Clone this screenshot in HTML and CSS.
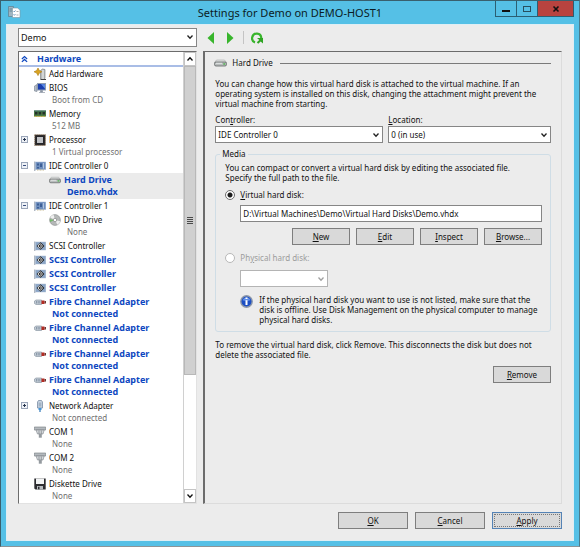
FILE: index.html
```html
<!DOCTYPE html>
<html lang="en">

<head>
  <meta charset="UTF-8" />
  <meta name="viewport" content="width=device-width, initial-scale=1.0" />
  <title>Settings for Demo on DEMO-HOST1</title>
  <link rel="stylesheet" href="styles.css">
</head>

<body>
  <!-- shared icons -->
  <svg class="sprite" aria-hidden="true">
    <symbol id="chevron" viewBox="0 0 8 8">
      <path d="M1.5 2.5 4 5.3 6.5 2.5" fill="none" stroke="currentColor" stroke-width="1.3" />
    </symbol>
    <symbol id="plus" viewBox="0 0 7 7">
      <rect x=".5" y=".5" width="6" height="6" fill="#eef1f6" stroke="#9aa5b8" />
      <path d="M2 3.5h3M3.5 2v3" stroke="#26334d" />
    </symbol>
    <symbol id="minus" viewBox="0 0 7 7">
      <rect x=".5" y=".5" width="6" height="6" fill="#eef1f6" stroke="#9aa5b8" />
      <path d="M2 3.5h3" stroke="#3a4f80" />
    </symbol>
    <symbol id="add-hardware" viewBox="0 0 12 12">
      <path d="M6.5 2.5 8.5 1l2.5.5v9L9 12l-2.5-1z" fill="#b9bcbc" stroke="#74797a" stroke-width=".6" />
      <path d="M9 2v9" stroke="#eef0f0" />
      <path d="M6.5 11.5H12" stroke="#444" />
      <path d="M4 0l1.300 2.500L8 3.800 5.300 5.100 4 7.600 2.700 5.100 0 3.800l2.700-1.300z" fill="#d9a321" stroke="#a97a10" stroke-width=".6" />
    </symbol>
    <symbol id="bios" viewBox="0 0 12 12">
      <path d="M.5 4 3 2.5v7L.5 9z" fill="#b4bcc8" stroke="#76818f" stroke-width=".6" />
      <rect x="3.5" y="1.5" width="8" height="6.5" fill="#1b3fae" stroke="#8f9db2" />
      <path d="m7 2 4 .2v4.5z" fill="#5d8ce6" />
      <path d="M6.5 8.5h2V10h-2zM5 10.5h6" fill="#8c96a5" stroke="#8c96a5" stroke-width=".7" />
    </symbol>
    <symbol id="memory" viewBox="0 0 12 12">
      <path d="M0 2.5h12v6H0z" fill="#4d7a44" />
      <path d="M1 4h2.5v2.5H1zM4.7 4h2.5v2.5H4.7zM8.5 4H11v2.5H8.5z" fill="#23302c" />
      <path d="M0 3h12" stroke="#2e5f63" stroke-width=".8" />
      <path d="M.5 8.5h11" stroke="#c6aa3c" stroke-dasharray="1 .6" />
    </symbol>
    <symbol id="processor" viewBox="0 0 12 12">
      <rect x=".7" y=".7" width="10.8" height="10.8" fill="#3a322f" stroke="#a08a70" stroke-dasharray="1 1" />
      <rect x="1.5" y="1.5" width="9" height="9" fill="#26262a" />
      <rect x="3" y="3" width="6" height="6" fill="#c0c2c6" />
    </symbol>
    <symbol id="ide" viewBox="0 0 12 12">
      <path d="M.3 1.5h1V11h-1z" fill="#8d99a8" />
      <path d="M1.5 2h10.3v7.5H1.5z" fill="#6f8fbd" stroke="#9db3d2" stroke-width=".5" />
      <path d="M3 3.5h2v2H3zM6 3.5h2V7H6zM3 7h2v1.5H3z" fill="#3d5f96" />
      <path d="M9.5 3v5.5" stroke="#c4d3ea" stroke-width=".8" />
      <path d="M3 10h7" stroke="#b59f62" stroke-width=".7" stroke-dasharray="1 .5" />
    </symbol>
    <symbol id="scsi" viewBox="0 0 12 12">
      <path d="M.3 1.5h1V11h-1z" fill="#8d99a8" />
      <path d="M1.5 2h10.3v8H1.5z" fill="#8ba5c6" stroke="#a9bbd3" stroke-width=".5" />
      <path d="M6.5 2.2 10.3 6 6.5 9.8 2.7 6z" fill="#161616" />
      <path d="M7.7 4.6a2 2 0 1 0 0 2.8M5.8 6H9" fill="none" stroke="#fff" stroke-width=".9" />
    </symbol>
    <symbol id="drive" viewBox="0 0 13 8">
      <path d="M2.5 1h8l2 2.5H.5z" fill="#dfe1e1" stroke="#9a9d9d" stroke-width=".5" />
      <rect x=".5" y="3" width="12" height="4" rx="1.5" fill="#b9bdbd" stroke="#606464" stroke-width=".8" />
      <path d="M2 4.3h6" stroke="#f0f2f2" stroke-width=".8" />
      <path d="M9.3 5h2" stroke="#3cb43c" stroke-width="1.2" />
    </symbol>
    <symbol id="dvd" viewBox="0 0 12 12">
      <circle cx="6" cy="6" r="5.4" fill="#b5b8b8" stroke="#888c8c" stroke-width=".6" />
      <path d="M6 6 1.2 3.6A5.4 5.4 0 0 1 4.6.8zM6 6l5.2 1.3a5.4 5.4 0 0 1-2.800 3.4z" fill="#efefef" />
      <path d="M6 6 .8 5.2 1 8z" fill="#72b86a" />
      <circle cx="6" cy="6" r="1.7" fill="#fff" stroke="#777" stroke-width=".6" />
    </symbol>
    <symbol id="fibre" viewBox="0 0 12 12">
      <path d="M.5 5 2 4h5.5v4.5H2l-1.500-1z" fill="#c3ccd6" stroke="#7e8b99" stroke-width=".6" />
      <path d="M2.500 5v2.500M4.200 5v2.500M5.800 5v2.500" stroke="#66788c" stroke-width=".6" />
      <path d="M7.5 4.5h3V8h-3z" fill="#b32a22" />
      <path d="M10.5 5H12v2.5h-1.500z" fill="#6e3430" />
    </symbol>
    <symbol id="network" viewBox="0 0 12 12">
      <path d="M4.5.5h3l1 1.5v6h-5V2z" fill="#c9d6e4" stroke="#6e8199" stroke-width=".7" />
      <path d="M5.2 2.5v4M6.8 2.5v4" stroke="#6e8199" stroke-width=".6" />
      <path d="M4.5 8h3v2h-3z" fill="#4595d8" />
      <path d="M6 10v2" stroke="#2b76b8" stroke-width="1.2" />
    </symbol>
    <symbol id="com" viewBox="0 0 12 12">
      <path d="M.3 1h11.4v3H.3z" fill="#b4b9be" stroke="#72787e" stroke-width=".6" />
      <path d="M2 4h8.2L9 8H3.5z" fill="#d3d7da" stroke="#7c8288" stroke-width=".6" />
      <path d="M5 4.5V8M7.3 4.5V8" stroke="#6d7379" stroke-width=".6" />
      <path d="M4.8 8h3v3.7h-3z" fill="#949a9f" />
    </symbol>
    <symbol id="diskette" viewBox="0 0 12 12">
      <path d="M.3.5h11.4v11H1.5l-1.200-1z" fill="#2d2d31" />
      <path d="M2 .5h8V6H2z" fill="#f3f4f5" />
      <path d="M3 8h6v3.5H3z" fill="#b8bcc0" />
      <path d="M4 8.7h1.5v2.5H4z" fill="#2d2d31" />
    </symbol>
  </svg>

  <div class="window">
    <header class="titlebar">
      <svg class="app-icon" viewBox="0 0 13 12" aria-hidden="true">
        <path d="M.5.5h5v10h-5z" fill="#9fb6c2" stroke="#5d7e8e" stroke-width=".7" />
        <path d="M1.5 3h3M1.5 5h3" stroke="#4e7282" stroke-width=".7" />
        <path d="M4.5 2h5L12 4v7.5H4.5z" fill="#fff" stroke="#7c96a2" stroke-width=".6" />
        <path d="m5.5 5 .8.8 1.200-1.300m-2 4 .8.8L7.5 8" fill="none" stroke="#2c6da3" stroke-width=".7" />
        <path d="M8.5 5.5h2M8.5 9h2" stroke="#888" stroke-width=".7" />
      </svg>
      <h1>Settings for Demo on DEMO-HOST1</h1>
      <div class="window-controls">
        <button type="button" aria-label="Minimize"><svg viewBox="0 0 8 8"><path d="M0 6h8" stroke="#111" stroke-width="2" /></svg></button>
        <button type="button" aria-label="Maximize"><svg viewBox="0 0 8 8"><rect x=".5" y="1.5" width="7" height="5" fill="none" stroke="#27505f" /></svg></button>
        <button type="button" class="close" aria-label="Close"><svg viewBox="0 0 8 8"><path d="m1.5 1.5 5 5m0-5-5 5" stroke="#111" stroke-width="1.6" /></svg></button>
      </div>
    </header>

    <div class="client">
      <div class="toolbar">
        <div class="select vm-select">
          <select aria-label="Virtual machine">
            <option>Demo</option>
          </select>
          <svg><use href="#chevron" /></svg>
        </div>
        <div class="nav">
          <button type="button" aria-label="Back"><svg viewBox="0 0 12 12"><path d="M9 0v12L2.5 6z" fill="#38b52c" /></svg></button>
          <button type="button" aria-label="Forward"><svg viewBox="0 0 12 12"><path d="M3 0v12l6.5-6z" fill="#38b52c" /></svg></button>
          <span class="divider"></span>
          <button type="button" aria-label="Refresh"><svg viewBox="0 0 12 12"><path d="M4 10.5A4.6 4.6 0 1 1 10.3 6" fill="none" stroke="#38b52c" stroke-width="2.2" /><path d="M6 6h6v5.5L9.700 9.400l-2.500 2.300-1.400-1.500 2.500-2.200z" fill="#2fa524" /></svg></button>
        </div>
      </div>

      <div class="panes">
        <nav class="tree-pane" aria-label="Hardware settings">
          <div class="tree">
            <h2><svg viewBox="0 0 8 8"><path d="m1 4 3-2.8L7 4M1 7.3l3-2.8 3 2.8" fill="none" stroke="#0d47c0" stroke-width="1.4" /></svg>Hardware</h2>
            <ul>
              <li><svg><use href="#add-hardware" /></svg><a href="#">Add Hardware</a></li>
              <li><svg><use href="#bios" /></svg><a href="#">BIOS<small>Boot from CD</small></a></li>
              <li><svg><use href="#memory" /></svg><a href="#">Memory<small>512 MB</small></a></li>
              <li><button type="button" class="toggle" aria-label="Expand Processor"><svg><use href="#plus" /></svg></button><svg><use href="#processor" /></svg><a href="#">Processor<small>1 Virtual processor</small></a></li>
              <li><button type="button" class="toggle" aria-label="Collapse IDE Controller 0"><svg><use href="#minus" /></svg></button><svg><use href="#ide" /></svg><a href="#">IDE Controller 0</a></li>
              <li class="child changed selected"><svg><use href="#drive" /></svg><a href="#">Hard Drive<small>Demo.vhdx</small></a></li>
              <li><button type="button" class="toggle" aria-label="Collapse IDE Controller 1"><svg><use href="#minus" /></svg></button><svg><use href="#ide" /></svg><a href="#">IDE Controller 1</a></li>
              <li class="child"><svg><use href="#dvd" /></svg><a href="#">DVD Drive<small>None</small></a></li>
              <li><svg><use href="#scsi" /></svg><a href="#">SCSI Controller</a></li>
              <li class="changed"><svg><use href="#scsi" /></svg><a href="#">SCSI Controller</a></li>
              <li class="changed"><svg><use href="#scsi" /></svg><a href="#">SCSI Controller</a></li>
              <li class="changed"><svg><use href="#scsi" /></svg><a href="#">SCSI Controller</a></li>
              <li class="changed"><svg><use href="#fibre" /></svg><a href="#">Fibre Channel Adapter<small>Not connected</small></a></li>
              <li class="changed"><svg><use href="#fibre" /></svg><a href="#">Fibre Channel Adapter<small>Not connected</small></a></li>
              <li class="changed"><svg><use href="#fibre" /></svg><a href="#">Fibre Channel Adapter<small>Not connected</small></a></li>
              <li class="changed"><svg><use href="#fibre" /></svg><a href="#">Fibre Channel Adapter<small>Not connected</small></a></li>
              <li><button type="button" class="toggle" aria-label="Expand Network Adapter"><svg><use href="#plus" /></svg></button><svg><use href="#network" /></svg><a href="#">Network Adapter<small>Not connected</small></a></li>
              <li><svg><use href="#com" /></svg><a href="#">COM 1<small>None</small></a></li>
              <li><svg><use href="#com" /></svg><a href="#">COM 2<small>None</small></a></li>
              <li><svg><use href="#diskette" /></svg><a href="#">Diskette Drive<small>None</small></a></li>
            </ul>
          </div>
          <div class="scrollbar">
            <button type="button" class="up" aria-label="Scroll up"><svg><use href="#chevron" /></svg></button>
            <div class="track">
              <div class="thumb"><span></span></div>
            </div>
            <button type="button" aria-label="Scroll down"><svg><use href="#chevron" /></svg></button>
          </div>
        </nav>

        <main class="detail">
          <h2><svg viewBox="0 0 13 8"><use href="#drive" /></svg>Hard Drive</h2>
          <div class="detail-body">
            <p>You can change how this virtual hard disk is attached to the virtual machine. If an operating system is installed on this disk, changing the attachment might prevent the virtual machine from starting.</p>

            <div class="attach">
              <div class="field">
                <label for="controller">Con<u>t</u>roller:</label>
                <div class="select">
                  <select id="controller">
                    <option>IDE Controller 0</option>
                  </select>
                  <svg><use href="#chevron" /></svg>
                </div>
              </div>
              <div class="field">
                <label for="location"><u>L</u>ocation:</label>
                <div class="select">
                  <select id="location">
                    <option>0 (in use)</option>
                  </select>
                  <svg><use href="#chevron" /></svg>
                </div>
              </div>
            </div>

            <fieldset>
              <legend>Media</legend>
              <p>You can compact or convert a virtual hard disk by editing the associated file.<br>Specify the full path to the file.</p>
              <div class="radio">
                <input type="radio" name="media" id="vhd" checked>
                <label for="vhd"><u>V</u>irtual hard disk:</label>
              </div>
              <div class="option-body">
                <input type="text" class="path" aria-label="Virtual hard disk path" value="D:\Virtual Machines\Demo\Virtual Hard Disks\Demo.vhdx">
                <div class="actions">
                  <button type="button" class="btn"><u>N</u>ew</button>
                  <button type="button" class="btn"><u>E</u>dit</button>
                  <button type="button" class="btn"><u>I</u>nspect</button>
                  <button type="button" class="btn"><u>B</u>rowse...</button>
                </div>
              </div>
              <div class="radio disabled">
                <input type="radio" name="media" id="phd" disabled>
                <label for="phd">Ph<u>y</u>sical hard disk:</label>
              </div>
              <div class="option-body">
                <div class="select disk-select">
                  <select aria-label="Physical hard disk" disabled></select>
                  <svg><use href="#chevron" /></svg>
                </div>
                <div class="info">
                  <svg viewBox="0 0 13 13" aria-hidden="true">
                    <circle cx="6.5" cy="6.5" r="5.7" fill="#1c4fc4" stroke="#8e98a8" stroke-width="1.4" />
                    <path d="M2.5 5a4.5 4.5 0 0 1 8 0c-2 1.2-6 1.2-8 0z" fill="#5f8ee8" />
                    <path d="M6.5 2.5v1.6M6.5 5.2V10" stroke="#fff" stroke-width="2" />
                  </svg>
                  <p>If the physical hard disk you want to use is not listed, make sure that the disk is offline. Use Disk Management on the physical computer to manage physical hard disks.</p>
                </div>
              </div>
            </fieldset>

            <p>To remove the virtual hard disk, click Remove. This disconnects the disk but does not delete the associated file.</p>
            <div class="actions">
              <button type="button" class="btn"><u>R</u>emove</button>
            </div>
          </div>
        </main>
      </div>

      <footer>
        <button type="button" class="btn"><u>O</u>K</button>
        <button type="button" class="btn"><u>C</u>ancel</button>
        <button type="button" class="btn default"><u>A</u>pply</button>
      </footer>
    </div>
  </div>
</body>

</html>
```
FILE: styles.css
```css
* {
  box-sizing: border-box;
}

body {
  margin: 0;
  font: 8px/10px 'Noto Sans', 'Open Sans', sans-serif;
  color: #111;
}

button,
select,
input {
  font: inherit;
  color: inherit;
  margin: 0;
}

button {
  padding: 0;
  border: none;
  background: none;
}

h1,
h2,
p,
ul,
fieldset {
  margin: 0;
  padding: 0;
  font-weight: normal;
}

svg {
  display: block;
  flex: none;
}

.sprite {
  display: none;
}

.window {
  display: flex;
  flex-direction: column;
  min-height: 100vh;
  padding: 0 5px 5px;
  background: #55c0e6;
  border: 1px solid #39606e;
  border-right-color: #4a7c8e;
  border-bottom-color: #8d9498;
}

/* title bar */
.titlebar {
  display: grid;
  grid-template-columns: 79px 1fr 79px;
  height: 23px;
}

.app-icon {
  width: 13px;
  height: 12px;
  margin: 5px 2px;
}

h1 {
  font-size: 11px;
  line-height: 23px;
  text-align: center;
  color: #0b1c24;
}

.window-controls {
  display: flex;
  height: 16px;
  border: 1px solid #2b5f73;
  border-top: none;
}

.window-controls button {
  display: flex;
  flex: 1;
  align-items: center;
  justify-content: center;
}

.window-controls button + button {
  border-left: 1px solid #2b5f73;
}

.window-controls svg {
  width: 8px;
  height: 8px;
}

.window-controls .close {
  flex: 0 0 36px;
  background: #b8433f;
}

/* client area */
.client {
  display: flex;
  flex: 1;
  flex-direction: column;
  padding: 3px 11px 11px;
  background: #ececec;
  border: 1px solid #dfeef4;
}

.toolbar,
.panes {
  display: grid;
  grid-template-columns: 1fr 2fr;
  column-gap: 6px;
}

.toolbar {
  margin-bottom: 4px;
}

.nav {
  display: flex;
  align-items: center;
  gap: 7px;
  padding-left: 2px;
}

.nav svg {
  width: 12px;
  height: 12px;
}

.divider {
  width: 1px;
  height: 13px;
  background: #c4c4c4;
}

.select {
  position: relative;
}

.select select {
  display: block;
  width: 100%;
  height: 17px;
  padding: 0 12px 0 2px;
  appearance: none;
  background: #fff;
  border: 1px solid #868686;
  border-radius: 0;
}

.select svg {
  position: absolute;
  top: 5px;
  right: 3px;
  width: 8px;
  height: 8px;
  color: #222;
  pointer-events: none;
}

.vm-select select {
  height: 19px;
  font-size: 9px;
}

.select select:disabled {
  border-color: #b4b4b4;
  opacity: 1;
}

.select select:disabled + svg {
  color: #a0a0a0;
}

.panes {
  flex: 1;
}

/* hardware tree */
.tree-pane {
  display: grid;
  grid-template-columns: 1fr 13px;
  background: #fff;
  border: 1px solid #6c6c6c;
  border-right-color: #e2e2e2;
  border-bottom-color: #e2e2e2;
}

.tree h2 {
  display: flex;
  align-items: center;
  gap: 9px;
  height: 15px;
  padding-left: 2px;
  font-size: 9px;
  font-weight: bold;
  color: #0d47c0;
  border-bottom: 2px solid #a9bde6;
}

.tree h2 svg {
  width: 7px;
  height: 8px;
}

.tree ul {
  list-style: none;
}

.tree li {
  display: grid;
  grid-template-columns: 14px 14px 1fr;
  column-gap: 1px;
  padding-bottom: 1px;
}

.tree li > svg {
  grid-column: 2;
  width: 12px;
  height: 12px;
  margin-top: 1px;
}

.tree a {
  grid-column: 3;
  line-height: 13px;
  color: #111;
  text-decoration: none;
  white-space: nowrap;
}

.tree small {
  display: block;
  padding-left: 3px;
  font-size: 8px;
  line-height: 12px;
  color: #707070;
}

.tree .child {
  grid-template-columns: 29px 14px 1fr;
}

.tree .changed a,
.tree .changed small {
  font-size: 9px;
  font-weight: bold;
  color: #0d47c0;
}

.tree .selected {
  background: #ebebeb;
}

.toggle {
  grid-column: 1;
  grid-row: 1;
  align-self: start;
  margin: 3px 2px;
}

.toggle svg {
  width: 7px;
  height: 7px;
}

/* scrollbar */
.scrollbar {
  display: flex;
  flex-direction: column;
  border-left: 1px solid #d0d0d0;
}

.scrollbar button {
  display: flex;
  align-items: center;
  justify-content: center;
  height: 14px;
  border: 1px solid #c4c4c4;
}

.scrollbar button svg {
  width: 8px;
  height: 8px;
}

.scrollbar .up svg {
  transform: rotate(180deg);
}

.track {
  flex: 1;
}

.thumb {
  display: flex;
  align-items: center;
  justify-content: center;
  height: 73%;
  background: #d0d0d0;
  border: 1px solid #b8b8b8;
}

.thumb span {
  width: 6px;
  height: 7px;
  background: repeating-linear-gradient(#4a4a4a 0 1px, transparent 1px 2px);
}

/* settings page */
.detail {
  padding: 5px 10px 5px 9px;
  border: 1px solid #dcdcdc;
  border-top-color: #6c6c6c;
  border-left: 2px solid #6c6c6c;
}

.detail h2 {
  display: flex;
  align-items: center;
  gap: 5px;
  font-size: 8px;
  line-height: 12px;
}

.detail h2::after {
  content: "";
  flex: 1;
  height: 1px;
  margin-left: 2px;
  background: #7a7a7a;
}

.detail h2 svg {
  width: 13px;
  height: 8px;
}

.detail-body {
  padding: 10px 0 0 1px;
}

.attach {
  display: grid;
  grid-template-columns: 168px 1fr;
  gap: 5px;
  margin: 6px 0;
}

.field label {
  display: block;
  margin-bottom: 1px;
}

fieldset {
  min-width: 0;
  margin-bottom: 8px;
  padding: 4px 8px 6px 9px;
  border: 1px solid #cfdde6;
  border-radius: 3px;
}

legend {
  margin-left: -5px;
  padding: 0 2px;
}

.radio {
  display: flex;
  align-items: center;
  gap: 5px;
  margin: 7px 0 5px;
}

.radio input {
  width: 10px;
  height: 10px;
  appearance: none;
  background: #fff;
  border: 1px solid #6e6e6e;
  border-radius: 50%;
}

.radio input:checked {
  background: radial-gradient(#1c1c1c 0 2px, #fff 3px);
}

.radio.disabled {
  margin: 8px 0 7px;
  color: #9c9c9c;
}

.radio input:disabled {
  border-color: #b8b8b8;
}

.option-body {
  padding-left: 15px;
}

.path {
  display: block;
  width: 100%;
  height: 17px;
  padding: 0 2px;
  background: #fff;
  border: 1px solid #868686;
}

.actions {
  display: flex;
  justify-content: flex-end;
  gap: 6px;
  margin-top: 6px;
}

.btn {
  width: 58px;
  height: 17px;
  background: #d9d9d9;
  border: 1px solid #7e7e7e;
}

.btn.default {
  border-color: #5583b5;
  outline: 1px dotted #777;
  outline-offset: -3px;
}

.disk-select {
  width: 88px;
}

.info {
  display: flex;
  gap: 6px;
  margin-top: 8px;
}

.info svg {
  width: 13px;
  height: 13px;
}

footer {
  display: flex;
  justify-content: flex-end;
  gap: 7px;
  margin-top: 8px;
}

footer .btn {
  width: 70px;
}
```
